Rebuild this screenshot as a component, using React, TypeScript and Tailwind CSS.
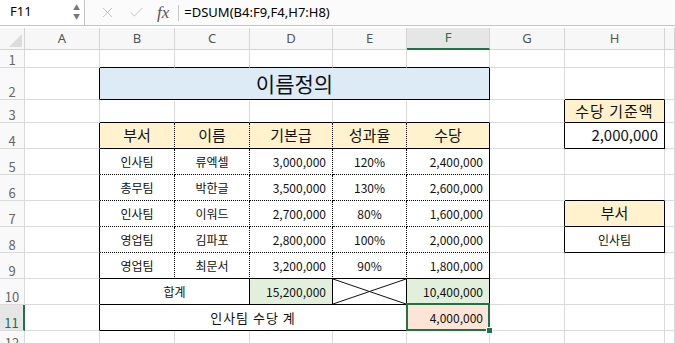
import { X, Check } from "lucide-react"

const base = "flex items-center overflow-hidden whitespace-nowrap border-r border-b"
const grid = "border-[#dadada]"
const ctr = "justify-center"
const rgt = "justify-end pr-[6px]"
const dotR = "[border-right-style:dotted]"
const dotB = "[border-bottom-style:dotted]"

const cols = ["A", "B", "C", "D", "E", "F", "G", "H", ""]

function RowHead({ n, active }: { n: number; active?: boolean }) {
  return (
    <div
      className={`flex items-end justify-center pb-[1px] border-r border-b border-[#dadada] text-[13px] leading-none ${
        active ? "bg-[#e6e6e6] text-[#217346] border-r-2 border-r-[#217346]" : "bg-[#f9f9f9] text-[#666]"
      }`}
    >
      {n}
    </div>
  )
}

function Cell({ cls = "", children }: { cls?: string; children?: React.ReactNode }) {
  return <div className={`${base} ${cls}`}>{children}</div>
}

type Row = { n: number; dept: string; name: string; pay: string; rate: string; bonus: string; last?: boolean }

const rows: Row[] = [
  { n: 5, dept: "인사팀", name: "류엑셀", pay: "3,000,000", rate: "120%", bonus: "2,400,000" },
  { n: 6, dept: "총무팀", name: "박한글", pay: "3,500,000", rate: "130%", bonus: "2,600,000" },
  { n: 7, dept: "인사팀", name: "이워드", pay: "2,700,000", rate: "80%", bonus: "1,600,000" },
  { n: 8, dept: "영업팀", name: "김파포", pay: "2,800,000", rate: "100%", bonus: "2,000,000" },
  { n: 9, dept: "영업팀", name: "최문서", pay: "3,200,000", rate: "90%", bonus: "1,800,000", last: true },
]

// right-side cells (G, H, I) for rows 5..9
function sideCells(n: number) {
  if (n === 6)
    return [
      <Cell key="g" cls={grid} />,
      <Cell key="h" cls="border-r-[#dadada] border-b-black" />,
      <Cell key="i" cls={grid} />,
    ]
  if (n === 7)
    return [
      <Cell key="g" cls="border-r-black border-b-[#dadada]" />,
      <Cell key="h" cls={`border-black bg-[#fff2cc] text-[15px] ${ctr}`}>부서</Cell>,
      <Cell key="i" cls={grid} />,
    ]
  if (n === 8)
    return [
      <Cell key="g" cls="border-r-black border-b-[#dadada]" />,
      <Cell key="h" cls={`border-black text-[12px] ${ctr}`}>인사팀</Cell>,
      <Cell key="i" cls={grid} />,
    ]
  return [
    <Cell key="g" cls={grid} />,
    <Cell key="h" cls={grid} />,
    <Cell key="i" cls={grid} />,
  ]
}

function App() {
  return (
    <div className="w-[675px] h-[343px] overflow-hidden bg-white text-black font-['Noto_Sans_CJK_KR','Noto_Sans',sans-serif]">
      {/* formula bar */}
      <div className="h-[26px] flex items-center bg-[#fbfbfb] border-b border-[#c4c4c4]">
        <div className="w-[85px] h-[26px] flex items-center justify-between bg-white border-r border-b border-[#c6c6c6] pl-[10px] pr-[4px]">
          <span className="text-[13px] font-['Noto_Sans',sans-serif]">F11</span>
          <span className="flex flex-col items-center leading-none text-[#777] text-[7px] gap-[2px]">
            <span>▲</span>
            <span>▼</span>
          </span>
        </div>
        <div className="flex items-center gap-[12px] pl-[14px] text-[#c2c2c2]">
          <X size={17} strokeWidth={1.4} />
          <Check size={17} strokeWidth={1.4} />
        </div>
        <span className="ml-[12px] text-[17px] italic text-[#555] font-['Liberation_Serif',serif]">fx</span>
        <div className="ml-[9px] w-px h-[16px] bg-[#c8c8c8]" />
        <span className="ml-[5px] text-[13px] font-['Noto_Sans',sans-serif]">=DSUM(B4:F9,F4,H7:H8)</span>
      </div>
      <div className="h-[2px] bg-white" />

      <div className="relative grid grid-cols-[25px_75px_75px_75px_83px_74px_83px_75px_100px_1fr] grid-rows-[22px_18px_32px_23px_repeat(8,26px)_20px] text-[#111]">
        {/* column headers */}
        <div className="relative bg-[#f7f7f7] border-r border-b border-[#d4d4d4]">
          <svg className="absolute right-[2px] bottom-[2px]" width="13" height="13">
            <polygon points="13,0 13,13 0,13" fill="#dcdcdc" />
          </svg>
        </div>
        {cols.map((c) => (
          <div
            key={c || "i"}
            className={`flex items-center justify-center text-[13px] font-['Noto_Sans',sans-serif] border-r border-b ${
              c === "F"
                ? "bg-[#e6e6e6] text-[#217346] border-r-[#d4d4d4] border-b-2 border-b-[#217346]"
                : "bg-[#f7f7f7] text-[#555] border-[#d4d4d4]"
            }`}
          >
            {c}
          </div>
        ))}

        {/* row 1 */}
        <RowHead n={1} />
        <Cell cls={grid} />
        <Cell cls="border-r-[#dadada] border-b-black" />
        <Cell cls="border-r-[#dadada] border-b-black" />
        <Cell cls="border-r-[#dadada] border-b-black" />
        <Cell cls="border-r-[#dadada] border-b-black" />
        <Cell cls="border-r-[#dadada] border-b-black" />
        <Cell cls={grid} />
        <Cell cls={grid} />
        <Cell cls={grid} />

        {/* row 2 */}
        <RowHead n={2} />
        <Cell cls="border-r-black border-b-[#dadada]" />
        <div className={`${base} col-span-5 border-black bg-[#ddebf7] text-[21px] ${ctr}`}>이름정의</div>
        <Cell cls={grid} />
        <Cell cls="border-r-[#dadada] border-b-black" />
        <Cell cls={grid} />

        {/* row 3 */}
        <RowHead n={3} />
        <Cell cls={grid} />
        <Cell cls="border-r-[#dadada] border-b-black" />
        <Cell cls="border-r-[#dadada] border-b-black" />
        <Cell cls="border-r-[#dadada] border-b-black" />
        <Cell cls="border-r-[#dadada] border-b-black" />
        <Cell cls="border-r-[#dadada] border-b-black" />
        <Cell cls="border-r-black border-b-[#dadada]" />
        <Cell cls={`border-black bg-[#fff2cc] text-[15px] tracking-[1px] ${ctr}`}>수당 기준액</Cell>
        <Cell cls={grid} />

        {/* row 4 */}
        <RowHead n={4} />
        <Cell cls="border-r-black border-b-[#dadada]" />
        <Cell cls={`border-black ${dotR} bg-[#fff2cc] text-[15px] ${ctr}`}>부서</Cell>
        <Cell cls={`border-black ${dotR} bg-[#fff2cc] text-[15px] ${ctr}`}>이름</Cell>
        <Cell cls={`border-black ${dotR} bg-[#fff2cc] text-[15px] ${ctr}`}>기본급</Cell>
        <Cell cls={`border-black ${dotR} bg-[#fff2cc] text-[15px] ${ctr}`}>성과율</Cell>
        <Cell cls={`border-black bg-[#fff2cc] text-[15px] ${ctr}`}>수당</Cell>
        <Cell cls="border-r-black border-b-[#dadada]" />
        <Cell cls={`border-black text-[15px] justify-end pr-[6px]`}>2,000,000</Cell>
        <Cell cls={grid} />

        {/* rows 5-9 */}
        {rows.map((r) => {
          const b = r.last ? "" : dotB
          return [
            <RowHead key={`h${r.n}`} n={r.n} />,
            <Cell key={`a${r.n}`} cls="border-r-black border-b-[#dadada]" />,
            <Cell key={`b${r.n}`} cls={`border-black ${dotR} ${b} text-[12px] ${ctr}`}>{r.dept}</Cell>,
            <Cell key={`c${r.n}`} cls={`border-black ${dotR} ${b} text-[12px] ${ctr}`}>{r.name}</Cell>,
            <Cell key={`d${r.n}`} cls={`border-black ${dotR} ${b} text-[12px] ${rgt}`}>{r.pay}</Cell>,
            <Cell key={`e${r.n}`} cls={`border-black ${dotR} ${b} text-[12px] ${ctr}`}>{r.rate}</Cell>,
            <Cell key={`f${r.n}`} cls={`border-black ${b} text-[12px] ${rgt}`}>{r.bonus}</Cell>,
            ...sideCells(r.n),
          ]
        })}

        {/* row 10 */}
        <RowHead n={10} />
        <Cell cls="border-r-black border-b-[#dadada]" />
        <div className={`${base} col-span-2 border-black text-[12px] ${ctr}`}>합계</div>
        <Cell cls={`border-black bg-[#e2efda] text-[12px] ${rgt}`}>15,200,000</Cell>
        <Cell cls="relative border-black">
          <svg className="absolute inset-0" width="100%" height="100%" preserveAspectRatio="none" viewBox="0 0 73 25">
            <line x1="0" y1="0" x2="73" y2="25" stroke="#111" strokeWidth="1" vectorEffect="non-scaling-stroke" />
            <line x1="0" y1="25" x2="73" y2="0" stroke="#111" strokeWidth="1" vectorEffect="non-scaling-stroke" />
          </svg>
        </Cell>
        <Cell cls={`border-black bg-[#e2efda] text-[12px] ${rgt}`}>10,400,000</Cell>
        <Cell cls={grid} />
        <Cell cls={grid} />
        <Cell cls={grid} />

        {/* row 11 */}
        <RowHead n={11} active />
        <Cell cls="border-r-black border-b-[#dadada]" />
        <div className={`${base} col-span-4 border-black text-[13px] tracking-[1px] ${ctr}`}>인사팀 수당 계</div>
        <div className="relative z-10 flex items-center justify-end pr-[6px] whitespace-nowrap border-r border-b border-black bg-[#fce4d6] text-[12px]">
          4,000,000
          <div className="absolute -left-[1px] -top-[2px] -right-[1px] -bottom-[1px] border-2 border-[#217346]" />
          <div className="absolute -right-[4px] -bottom-[4px] w-[7px] h-[7px] bg-[#217346] border border-white" />
        </div>
        <Cell cls={grid} />
        <Cell cls={grid} />
        <Cell cls={grid} />

        {/* row 12 */}
        <RowHead n={12} />
        {cols.map((c) => (
          <Cell key={`r12${c}`} cls={grid} />
        ))}
      </div>
    </div>
  )
}

export default App
